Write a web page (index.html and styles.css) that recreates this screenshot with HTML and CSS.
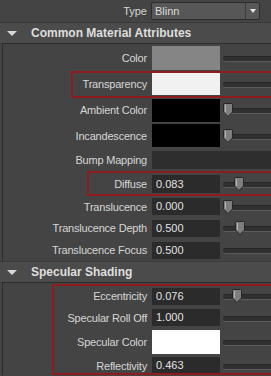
FILE: index.html
```html
<!DOCTYPE html>
<html lang="en">
<head>
  <meta charset="UTF-8" />
  <title>Blinn Attributes</title>
  <link rel="stylesheet" href="styles.css">
</head>
<body>

  <div class="type-row">
    <span class="type-label">Type</span>
    <div class="dropdown">
      <span class="dropdown-text">Blinn</span>
      <span class="dropdown-arrow"></span>
    </div>
  </div>

  <!-- Common Material Attributes -->
  <section class="group">
    <div class="group-head"><span class="tri"></span>Common Material Attributes</div>
    <div class="group-body first">
      <div class="row h26">
        <label>Color</label>
        <div class="swatch sw-gray"></div>
        <div class="slider"></div>
      </div>
      <div class="row h26">
        <label>Transparency</label>
        <div class="swatch sw-light short"></div>
        <div class="slider"></div>
      </div>
      <div class="row h26">
        <label>Ambient Color</label>
        <div class="swatch sw-black"></div>
        <div class="slider"><span class="thumb" style="left:0px"></span></div>
      </div>
      <div class="row h25">
        <label>Incandescence</label>
        <div class="swatch sw-black"></div>
        <div class="slider"><span class="thumb" style="left:0px"></span></div>
      </div>
      <div class="row h24">
        <label>Bump Mapping</label>
        <div class="field wide"></div>
      </div>
      <div class="row h24">
        <label>Diffuse</label>
        <div class="field tall">0.083</div>
        <div class="slider"><span class="thumb" style="left:11px"></span></div>
      </div>
      <div class="row h21">
        <label>Translucence</label>
        <div class="field">0.000</div>
        <div class="slider"><span class="thumb" style="left:0px"></span></div>
      </div>
      <div class="row h22">
        <label>Translucence Depth</label>
        <div class="field">0.500</div>
        <div class="slider"><span class="thumb" style="left:12px"></span></div>
      </div>
      <div class="row h22">
        <label>Translucence Focus</label>
        <div class="field">0.500</div>
        <div class="slider"></div>
      </div>
    </div>
  </section>

  <!-- Specular Shading -->
  <section class="group">
    <div class="group-head"><span class="tri"></span>Specular Shading</div>
    <div class="group-body second">
      <div class="row h22">
        <label>Eccentricity</label>
        <div class="field">0.076</div>
        <div class="slider"><span class="thumb" style="left:9px"></span></div>
      </div>
      <div class="row h21">
        <label>Specular Roll Off</label>
        <div class="field">1.000</div>
        <div class="slider"></div>
      </div>
      <div class="row h28">
        <label>Specular Color</label>
        <div class="swatch sw-white"></div>
        <div class="slider"></div>
      </div>
      <div class="row h19">
        <label>Reflectivity</label>
        <div class="field">0.463</div>
        <div class="slider"></div>
      </div>
    </div>
  </section>

  <!-- highlight boxes drawn over the editor -->
  <div class="mark mark-transp"></div>
  <div class="mark mark-diffuse"></div>
  <div class="mark mark-spec"></div>

  <script>
    // slider thumbs
    document.querySelectorAll(".thumb").forEach(t => {
      t.innerHTML =
        '<svg width="10" height="14" viewBox="0 0 10 14">' +
        '<path d="M1.5 0.5h7a1 1 0 0 1 1 1v7.5l-4.5 4.5l-4.5-4.5v-7.5a1 1 0 0 1 1-1z" fill="#7e7e7e" stroke="#262626"/>' +
        '<path d="M2.5 2v7" stroke="#b4b4b4"/>' +
        '</svg>';
    });
  </script>
</body>
</html>
```

FILE: styles.css
```css
* {
  box-sizing: border-box;
  margin: 0;
  padding: 0;
}

body {
  position: relative;
  width: 271px;
  height: 376px;
  overflow: hidden;
  background: #444444;
  color: #d6d6d6;
  font-family: "Liberation Sans", Arial, sans-serif;
  font-size: 11px;
}

/* Type row */
.type-row {
  display: flex;
  align-items: center;
  height: 22px;
}

.type-label {
  width: 148px;
  padding-right: 1px;
  text-align: right;
}

.dropdown {
  display: flex;
  align-items: center;
  margin-left: 3px;
  width: 109px;
  height: 18px;
  background: #575757;
  border: 1px solid #2c2c2c;
  border-radius: 2px;
}

.dropdown-text {
  flex: 1;
  padding-left: 3px;
  color: #dcdcdc;
}

.dropdown-arrow {
  position: relative;
  width: 14px;
  height: 100%;
  border-left: 1px solid #3a3a3a;
}

.dropdown-arrow::after {
  content: "";
  position: absolute;
  left: 4px;
  top: 6px;
  border-left: 3px solid transparent;
  border-right: 3px solid transparent;
  border-top: 4px solid #e6e6e6;
}

/* Groups */
.group-head {
  display: flex;
  align-items: center;
  height: 21px;
  background: #4b4b4b;
  border-top: 1px solid #393939;
  font-size: 12px;
  font-weight: bold;
  color: #dedede;
}

.tri {
  margin: 0 14px 0 7px;
  border-left: 5px solid transparent;
  border-right: 5px solid transparent;
  border-top: 5px solid #d8d8d8;
}

.group-body {
  margin-left: 2px;
  border-left: 1px solid #2d2d2d;
  border-top: 1px solid #2d2d2d;
}

.group-body.first {
  padding-top: 1px;
}

.group-body.second {
  padding-top: 2px;
}

.row {
  display: flex;
  align-items: center;
}

.h19 { height: 19px; }
.h21 { height: 21px; }
.h22 { height: 22px; }
.h24 { height: 24px; }
.h25 { height: 25px; }
.h26 { height: 26px; }
.h28 { height: 28px; }

.row label {
  width: 146px;
  padding-right: 2px;
  text-align: right;
  white-space: nowrap;
  letter-spacing: -0.2px;
}

.swatch,
.field {
  flex: none;
  margin-left: 3px;
  width: 68px;
}

.swatch {
  height: 23px;
}

.swatch.short {
  height: 22px;
}

.sw-gray  { background: #858585; height: 24px; }
.sw-light { background: #f1f1f1; }
.sw-black { background: #000000; }
.sw-white { background: #ffffff; height: 24px; }

.field {
  height: 17px;
  padding-left: 4px;
  line-height: 17px;
  background: #2b2b2b;
  color: #e2e2e2;
}

.field.tall {
  height: 18px;
  line-height: 18px;
}

.field.wide {
  width: auto;
  flex: 1;
  height: 18px;
  background: #2e2e2e;
}

/* Sliders */
.slider {
  position: relative;
  flex: 1;
  height: 14px;
  margin-left: 3px;
}

.slider::before {
  content: "";
  position: absolute;
  left: 0;
  right: -10px;
  top: 5px;
  height: 4px;
  background: #303030;
  border-top: 1px solid #262626;
  border-bottom: 1px solid #5c5c5c;
  border-radius: 2px 0 0 2px;
}

.thumb {
  position: absolute;
  top: 0;
  width: 10px;
  height: 14px;
}

.thumb svg {
  display: block;
}

/* Red highlight boxes */
.mark {
  position: absolute;
  right: -10px;
  border: 2px solid #8e1c1c;
}

.mark-transp {
  left: 71px;
  top: 71px;
  height: 27px;
}

.mark-diffuse {
  left: 87px;
  top: 171px;
  height: 25px;
}

.mark-spec {
  left: 52px;
  top: 284px;
  height: 91px;
}
```
